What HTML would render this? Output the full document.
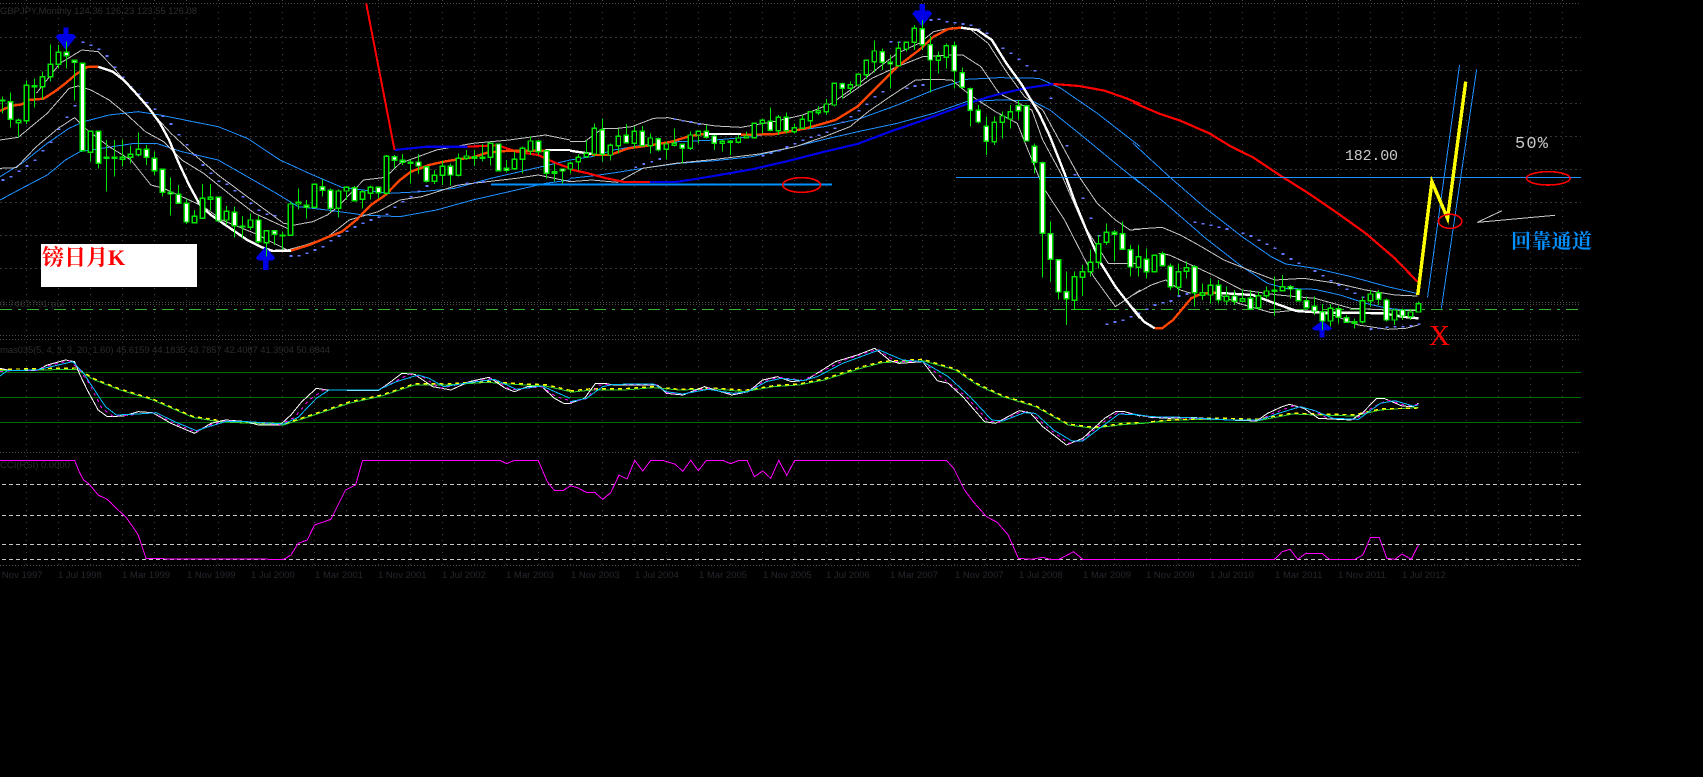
<!DOCTYPE html>
<html><head><meta charset="utf-8"><title>GBPJPY Monthly</title>
<style>
html,body{margin:0;padding:0;background:#000;width:1703px;height:777px;overflow:hidden}
svg{display:block;position:absolute;left:0;top:0}
path,ellipse{vector-effect:non-scaling-stroke;fill:none}
.lab{font-family:"Liberation Sans",sans-serif;font-size:9.5px;fill:#2c2c2c}
.d{font-family:"Liberation Sans",sans-serif;font-size:9.5px;fill:#26262e}
.w{stroke:#00e600;stroke-width:1}
.b{stroke-width:1.4}
.gy{stroke:#c4c4c4;stroke-width:1}
.bl{stroke:#1e90ff;stroke-width:1}
.dot{stroke:#6677ff;stroke-width:1.6;stroke-linecap:square}
.ma{stroke-width:2.4}
</style></head><body>
<svg width="1703" height="777" viewBox="0 0 1703 777" xmlns="http://www.w3.org/2000/svg" shape-rendering="crispEdges">
<rect width="1703" height="777" fill="#000"/>
<!-- grid -->
<path d="M26.5 0V565M58.5 0V565M90.5 0V565M122.5 0V565M154.5 0V565M186.5 0V565M218.5 0V565M250.5 0V565M282.5 0V565M314.5 0V565M346.5 0V565M378.5 0V565M410.5 0V565M442.5 0V565M474.5 0V565M506.5 0V565M538.5 0V565M570.5 0V565M602.5 0V565M634.5 0V565M666.5 0V565M698.5 0V565M730.5 0V565M762.5 0V565M794.5 0V565M826.5 0V565M858.5 0V565M890.5 0V565M922.5 0V565M954.5 0V565M986.5 0V565M1018.5 0V565M1050.5 0V565M1082.5 0V565M1114.5 0V565M1146.5 0V565M1178.5 0V565M1210.5 0V565M1242.5 0V565M1274.5 0V565M1306.5 0V565M1338.5 0V565M1370.5 0V565M1402.5 0V565M1434.5 0V565M1466.5 0V565M1498.5 0V565M1530.5 0V565M1562.5 0V565" stroke="#444" stroke-width="1" stroke-dasharray="1 5"/>
<path d="M0 37.5H1581M0 70.5H1581M0 103.5H1581M0 136.5H1581M0 169.5H1581M0 202.5H1581M0 235.5H1581M0 268.5H1581" stroke="#303838" stroke-width="1" stroke-dasharray="2 3"/>
<path d="M0 3.5H1581M0 302.5H1581M0 304.5H1581M0 335.5H1581M0 339.5H1581M0 452.5H1581M0 565.5H1581" stroke="#4c4c4c" stroke-width="1" stroke-dasharray="1 2"/>
<!-- fixed lines -->
<path d="M0 309.5H1581" stroke="#32b432" stroke-width="1" stroke-dasharray="12 6 3 6"/>
<path d="M0 372.5H1581M0 397.5H1581M0 422.5H1581" stroke="#006e00" stroke-width="1"/>
<path d="M2 484.5H1581M2 515.5H1581M2 544.5H1581M2 559.5H1581" stroke="#c8c8c8" stroke-width="1" stroke-dasharray="4 3"/>
<!-- labels -->
<text class="lab" x="0" y="14" textLength="197">GBPJPY,Monthly 124.36 126.23 123.55 126.08</text>
<text class="lab" x="0" y="307" textLength="64">0.7462701 pix</text>
<text class="lab" x="0" y="353" textLength="330">mas035(5, 4, 3, 3, 20, 1.60) 45.6159 44.1835 43.7857 42.4087 41.3904 50.6844</text>
<text class="lab" x="0" y="468" textLength="70">CCI(RSI) 0.0000</text>
<text class="d" x="-6" y="578">1 Nov 1997</text><text class="d" x="58" y="578">1 Jul 1998</text><text class="d" x="122" y="578">1 Mar 1999</text><text class="d" x="187" y="578">1 Nov 1999</text><text class="d" x="251" y="578">1 Jul 2000</text><text class="d" x="315" y="578">1 Mar 2001</text><text class="d" x="378" y="578">1 Nov 2001</text><text class="d" x="442" y="578">1 Jul 2002</text><text class="d" x="506" y="578">1 Mar 2003</text><text class="d" x="571" y="578">1 Nov 2003</text><text class="d" x="635" y="578">1 Jul 2004</text><text class="d" x="699" y="578">1 Mar 2005</text><text class="d" x="763" y="578">1 Nov 2005</text><text class="d" x="826" y="578">1 Jul 2006</text><text class="d" x="890" y="578">1 Mar 2007</text><text class="d" x="955" y="578">1 Nov 2007</text><text class="d" x="1019" y="578">1 Jul 2008</text><text class="d" x="1083" y="578">1 Mar 2009</text><text class="d" x="1146" y="578">1 Nov 2009</text><text class="d" x="1210" y="578">1 Jul 2010</text><text class="d" x="1275" y="578">1 Mar 2011</text><text class="d" x="1338" y="578">1 Nov 2011</text><text class="d" x="1402" y="578">1 Jul 2012</text>

<g>
<!-- CROP 1 -->
<g transform="translate(0 0) scale(.36364 .33333)">
<path class="bl" d="M0 600L60 565L130 525L180 480L220 455L280 445L370 430L430 430L500 455L600 480L680 530L760 580L820 620L900 630L1000 645L1100 650L1200 630L1300 600L1400 575L1500 550L1568 540"/>
<path class="bl" d="M0 530L60 490L130 430L190 385L230 365L300 345L380 335L440 345L530 365L600 380L680 415L770 480L850 520L940 562L1070 580L1160 575L1250 565L1350 535L1450 510L1568 480"/>
<path class="gy" d="M100 280L165 190L225 150L270 155L310 200L360 265L420 340L470 400L530 460L600 525L680 590L780 670L810 675L860 665L900 645L930 620L960 585L1000 540L1060 532L1100 490L1200 450L1300 430L1400 420L1500 405L1568 420"/>
<path class="gy" d="M0 420L50 412L130 340L190 265L215 258L250 270L300 300L350 345L400 395L450 425L500 480L560 520L640 590L700 640L800 690"/>
<path class="gy" d="M0 505L45 503L100 440L160 385L205 353L240 390L300 440L360 480L415 555L450 565L560 620L610 660L700 700L790 750L840 735L900 712L960 660L1040 635L1100 600L1160 590L1260 555L1340 545L1420 535L1480 525L1568 545"/>
<path class="dot" d="M7 540h3M29 530h3M51 514h3M73 498h3M95 481h3M117 452h3M139 427h3M161 388h3M183 352h3M205 317h3M227 127h3M249 136h3M271 148h3M293 168h3M315 202h3M337 232h3M359 260h3M381 283h3M403 308h3M425 328h3M447 349h3M469 372h3M491 404h3M513 434h3M535 465h3M557 495h3M579 520h3M601 544h3M623 553h3M645 572h3M667 590h3M689 610h3M711 631h3M733 643h3M755 647h3M799 768h3M821 767h3M843 760h3M865 750h3M887 740h3M909 722h3M931 708h3M953 694h3M975 681h3M997 670h3M1019 660h3M1041 652h3M1063 643h3M1085 622h3M1107 605h3M1129 590h3M1151 574h3M1173 558h3M1261 556h3M1283 550h3M1305 548h3M1327 546h3"/>
<path d="M1085 450L1175 440L1285 440" stroke="#0000e6" stroke-width="2.2"/>
<path d="M1285 440L1370 436L1420 455L1480 465L1500 475L1530 490L1568 505" stroke="#f00" stroke-width="2.2"/>
<path d="M1007 10L1085 450" stroke="#f00" stroke-width="2"/>
<path class="ma" stroke="#ff4500" d="M0 333L30 318L60 313L80 300L120 296L150 275L180 250L210 222L240 201L270 200"/>
<path class="ma" stroke="#fff" d="M270 200L310 215L340 240L370 275L410 325L440 370L465 420L490 485L520 555L550 615L580 645L620 675L680 720L720 742L750 753L800 752"/>
<path class="ma" stroke="#ff4500" d="M800 752L850 735L900 712L940 695L980 660L1020 615L1060 585L1100 540L1130 515L1180 495L1220 485L1260 478L1300 472L1340 458L1400 452L1500 452"/>
<path class="ma" stroke="#fff" d="M1500 450H1568"/>
<path d="M1350 553H1568" stroke="#0090ff" stroke-width="2"/>
<path style="fill:#0000e6" d="M174 82H189V102H201L209 110L181 150L153 110L161 102H174Z"/>
<path style="fill:#0000e6" d="M723 810H738V782H750L757 774L730 740L703 774L711 782H723Z"/>
<path class="w" d="M7 290V340M29 278V382M51 355V412M73 242V372M95 235V322M117 215V298M139 133V245M161 135V205M183 125V205M205 178V302M227 190V455M249 392V485M271 392V505M293 420V575M315 420V530M337 418V500M359 437V490M381 398V470M403 435V495M425 455V527M447 505V590M469 532V647M491 555V612M513 595V672M535 630V670M557 552V657M579 552V632M601 590V665M623 618V675M645 620V712M667 648V715M689 640V690M711 648V730M733 690V770M755 690V735M777 695V748M799 605V708M821 565V628M843 600V655M865 552V625M887 538V590M909 565V635M931 568V652M953 558V600M975 558V605M997 570V625M1019 557V598M1041 560V595M1063 465V583M1085 465V505M1107 462V495M1129 478V550M1151 462V522M1173 498V548M1195 510V552M1217 482V555M1239 490V557M1261 460V530M1283 450V480M1305 450V498M1327 432V485M1349 428V497M1371 430V515M1393 480V518M1415 455V510M1437 440V520M1459 410V465M1481 420V465M1503 450V535M1525 490V545M1547 505V550"/>
<path class="w b" style="fill:#000" d="M1 300H13V303H1ZM45 361H57V368H45ZM67 256H79V362H67ZM89 257H101V260H89ZM111 230H123V260H111ZM133 193H145V230H133ZM155 157H167V193H155ZM243 394H255V457H243ZM287 472H299V475H287ZM309 472H321V475H309ZM331 472H343V478H331ZM353 463H365V472H353ZM375 448H387V464H375ZM529 649H541V668H529ZM551 595H563V655H551ZM573 592H585V598H573ZM617 634H629V660H617ZM661 678H673V681H661ZM683 660H695V682H683ZM727 692H739V728H727ZM771 706H783V708H771ZM793 612H805V706H793ZM815 607H827V612H815ZM859 553H871V622H859ZM925 573H937V625H925ZM947 562H959V573H947ZM991 575H1003V598H991ZM1013 562H1025V580H1013ZM1057 469H1069V580H1057ZM1123 487H1135V490H1123ZM1189 526H1201V544H1189ZM1211 499H1223V526H1211ZM1255 475H1267V526H1255ZM1277 468H1289V475H1277ZM1321 472H1333V475H1321ZM1343 430H1355V472H1343ZM1409 478H1421V506H1409ZM1431 445H1443V478H1431ZM1453 423H1465V453H1453ZM1519 515H1531V520H1519Z"/>
<path class="w b" style="fill:#fff" d="M23 305H35V358H23ZM177 157H189V167H177ZM199 181H211V187H199ZM221 190H233V452H221ZM265 394H277V490H265ZM397 448H409V472H397ZM419 475H431V512H419ZM441 508H453V577H441ZM463 577H475V582H463ZM485 583H497V610H485ZM507 610H519V666H507ZM595 592H607V663H595ZM639 637H651V677H639ZM705 660H717V725H705ZM749 692H761V703H749ZM837 616H849V622H837ZM881 560H893V571H881ZM903 571H915V625H903ZM969 563H981V602H969ZM1035 562H1047V578H1035ZM1079 470H1091V481H1079ZM1101 481H1113V487H1101ZM1145 486H1157V498H1145ZM1167 500H1179V544H1167ZM1233 499H1245V525H1233ZM1299 470H1311V475H1299ZM1365 432H1377V512H1365ZM1387 505H1399V511H1387ZM1475 424H1487V455H1475ZM1497 452H1509V520H1497ZM1541 507H1553V513H1541Z"/>
</g>
<!-- CROP 2 -->
<g transform="translate(570 0) scale(.36364 .33333)">
<path class="bl" d="M0 535L60 528L130 517L200 505L300 490L400 482L500 470L600 445L700 418L800 393L900 370L1000 340L1090 305L1180 300L1270 302L1320 330L1400 400L1500 490L1568 550"/>
<path class="bl" d="M0 480L60 470L120 450L200 435L300 425L400 420L500 410L600 395L700 380L800 355L900 315L1000 270L1090 238L1180 233L1290 235L1350 265L1450 340L1568 440"/>
<path class="gy" d="M0 425L40 425L90 385L130 385L170 380L230 355L270 353L340 368L400 378L470 382L560 365L640 345L720 310L790 255L840 210L900 160L960 130L1000 95L1050 83L1100 87L1150 130L1200 215L1250 290L1300 330L1350 430L1400 530L1450 610L1500 660L1540 690L1568 688"/>
<path class="gy" d="M0 545L60 540L130 547L200 505L290 490L400 478L520 462L620 440L700 410L770 380L820 335L880 290L950 240L1000 238L1050 240L1100 285L1170 335L1230 370L1300 560L1360 660L1440 830L1500 920L1568 870"/>
<path class="gy" d="M750 295L830 235L900 200L970 170L1040 165L1080 165L1130 200L1180 280L1270 330L1300 420L1350 520L1410 670L1480 790L1568 790"/>
<path class="dot" d="M179 502h3M201 492h3M223 485h3M245 477h3M287 358h3M309 362h3M331 366h3M353 372h3M529 467h3M551 460h3M573 452h3M595 441h3M617 431h3M639 421h3M661 412h3M683 406h3M705 397h3M727 385h3M749 367h3M771 350h3M793 332h3M815 313h3M837 290h3M859 275h3M881 125h3M903 127h3M925 265h3M947 258h3M969 255h3M991 60h3M1013 58h3M1035 65h3M1057 68h3M1079 72h3M1101 76h3M1123 88h3M1145 100h3M1167 135h3M1189 145h3M1211 160h3M1233 178h3M1255 197h3M1277 212h3M1321 295h3M1365 437h3M1387 524h3M1409 595h3M1431 655h3M1453 707h3M1475 973h3M1497 966h3M1519 961h3M1541 950h3M1563 940h3"/>
<path d="M0 508L50 520L100 535L150 546L220 546" stroke="#f00" stroke-width="2.2"/>
<path d="M220 546L290 546L340 538L400 527L500 508L600 483L700 455L790 432L880 395L960 365L1060 325L1100 308L1170 285L1250 265L1330 252" stroke="#0000e6" stroke-width="2.2"/>
<path d="M1330 252L1400 258L1470 272L1530 295L1568 312" stroke="#f00" stroke-width="2.2"/>
<path class="ma" stroke="#fff" d="M0 452L60 462"/>
<path class="ma" stroke="#ff4500" d="M60 465L110 465L160 445L220 436L280 425L330 408L370 402"/>
<path class="ma" stroke="#fff" d="M370 402H470"/>
<path class="ma" stroke="#ff4500" d="M470 404L560 403L650 385L730 360L790 320L850 255L900 200L960 150L1000 110L1040 87L1075 83"/>
<path class="ma" stroke="#fff" d="M1075 83L1120 90L1160 120L1200 190L1240 250L1290 340L1320 410L1360 520L1390 610L1420 690L1460 790L1500 860L1568 955"/>
<path d="M0 553H720" stroke="#0090ff" stroke-width="2"/>
<path d="M1062 532H1568" stroke="#1e90ff" stroke-width="1"/>
<ellipse cx="637" cy="555" rx="52" ry="22" stroke="#f00" stroke-width="1.6"/>
<path style="fill:#0000e6" d="M961 12H976V32H988L996 40L968 80L941 40L949 32H961Z"/>
<path class="w" d="M1 485V520M23 462V512M45 420V472M67 370V470M89 355V485M111 430V482M133 385V460M155 372V430M177 380V445M199 378V440M221 400V460M243 412V455M265 425V478M287 385V440M309 432V490M331 395V450M353 395V430M375 375V415M397 405V450M419 420V455M441 420V465M463 405V430M485 395V415M507 368V415M529 355V400M551 322V395M573 345V405M595 338V400M617 370V400M639 345V385M661 335V385M683 318V345M705 297V345M727 248V320M749 248V295M771 245V280M793 220V260M815 178V237M837 122V217M859 145V210M881 165V265M903 125V200M925 125V155M947 75V150M969 60V150M991 108V278M1013 155V220M1035 130V205M1057 125V265M1079 203V265M1101 262V380M1123 315V370M1145 350V465M1167 350V435M1189 335V415M1211 315V385M1233 300V358M1255 315V425M1277 430V520M1299 485V832M1321 665V845M1343 778V898M1365 815V975M1387 815V928H1420M1409 795V888M1431 748V830M1453 705V805M1475 670V735M1497 690V785M1519 665V750M1541 735V830"/>
<path class="w b" style="fill:#000" d="M-5 490H7V507H-5ZM17 472H29V485H17ZM39 460H51V470H39ZM61 385H73V462H61ZM105 436H117V465H105ZM127 409H139V437H127ZM171 394H183V430H171ZM215 414H227V437H215ZM259 432H271V448H259ZM281 430H293V436H281ZM325 405H337V445H325ZM347 394H359V405H347ZM413 424H425V430H413ZM435 423H447V427H435ZM457 414H469V427H457ZM479 408H491V413H479ZM501 370H513V413H501ZM523 361H535V370H523ZM567 352H579V392H567ZM611 383H623V395H611ZM633 358H645V385H633ZM655 335H667V362H655ZM677 332H689V338H677ZM699 312H711V335H699ZM721 250H733V315H721ZM765 254H777V265H765ZM787 223H799V255H787ZM809 181H821V224H809ZM831 153H843V185H831ZM897 145H909V197H897ZM919 127H931V147H919ZM941 85H953V127H941ZM1007 169H1019V181H1007ZM1029 137H1041V172H1029ZM1161 367H1173V425H1161ZM1183 348H1195V367H1183ZM1205 335H1217V357H1205ZM1381 830H1393V901H1381ZM1403 815H1415V832H1403ZM1425 787H1437V815H1425ZM1447 731H1459V787H1447ZM1469 697H1481V727H1469Z"/>
<path class="w b" style="fill:#fff" d="M83 389H95V463H83ZM149 406H161V428H149ZM193 394H205V437H193ZM237 416H249V450H237ZM303 433H315V445H303ZM369 394H381V412H369ZM391 408H403V430H391ZM545 364H557V391H545ZM589 352H601V392H589ZM743 251H755V265H743ZM853 155H865V187H853ZM875 187H887V192H875ZM963 86H975V134H963ZM985 134H997V180H985ZM1051 137H1063V213H1051ZM1073 218H1085V262H1073ZM1095 266H1107V331H1095ZM1117 331H1129V366H1117ZM1139 379H1151V424H1139ZM1227 317H1239V332H1227ZM1249 317H1261V423H1249ZM1271 439H1283V487H1271ZM1293 488H1305V700H1293ZM1315 701H1327V778H1315ZM1337 779H1349V876H1337ZM1359 875H1371V896H1359ZM1491 697H1503V703H1491ZM1513 701H1525V748H1513ZM1535 749H1547V801H1535Z"/>
</g>
<!-- CROP 3 -->
<g transform="translate(1133 0) scale(.36364 .33333)">
<path class="bl" d="M0 430L100 530L200 625L300 710L380 770L420 792L500 805L600 830L700 860L780 880"/>
<path class="bl" d="M0 530L100 620L200 715L300 800L370 850L420 865L500 868L570 885L640 910L700 925L770 932"/>
<path class="gy" d="M0 688L80 682L130 705L180 735L250 780L330 815L390 840L470 835L560 850L640 870L720 885L782 888"/>
<path class="gy" d="M0 885L50 855L90 840L130 870L160 880M70 760L100 765L150 790L220 825L300 870L400 885L500 895L600 925L700 930L780 932"/>
<path class="gy" d="M170 885L230 880L290 910L380 938L450 930L550 945L620 975L700 988L750 985L785 975"/>
<path class="dot" d="M37 928h3M59 915h3M81 908h3M103 903h3M125 888h3M147 882h3M169 667h3M191 671h3M213 676h3M235 682h3M257 687h3M301 700h3M323 708h3M345 721h3M367 733h3M389 745h3M411 762h3M433 777h3M455 790h3M499 813h3M521 827h3M543 842h3M565 855h3M587 868h3M609 880h3M631 892h3M653 987h3M675 985h3M697 982h3M719 980h3M741 980h3M763 977h3M785 973h3"/>
<path stroke="#f00" stroke-width="2.2" d="M0 307L70 340L130 362L210 400L270 440L330 472L410 530L480 578L550 630L640 700L720 775L782 845"/>
<path class="ma" stroke="#fff" d="M0 925L30 965L60 985"/>
<path class="ma" stroke="#ff4500" d="M60 985L80 985L110 960L160 895L190 880L225 878"/>
<path class="ma" stroke="#fff" d="M225 878L330 885L390 910L450 933L520 938L600 938L690 940L740 950L785 955"/>
<path style="fill:#0000e6" d="M513 1012V992H500L492 985L520 962L548 985L540 992H527V1012Z"/>
<path class="w" d="M37 745V835M59 765V815M81 755V800M103 790V870M125 790V885M147 785V835M169 795V920M191 850V900M213 835V910M235 840V910M257 860V915M279 870V915M301 868V905M323 870V930M345 875V930M367 860V895M389 830V948M411 825V875M433 855V895M455 865V905M477 890V925M499 890V945M521 912V990M543 912V980M565 918V970M587 945V968M609 955V985M631 890V970M653 870V920M675 870V915M697 895V965M719 925V975M741 925V960M763 930V960M785 905V938M15 735V830"/>
<path class="w b" style="fill:#000" d="M9 770H21V802H9ZM53 766H65V815H53ZM119 815H131V862H119ZM141 803H153V814H141ZM185 878H197V886H185ZM207 856H219V885H207ZM251 889H263V903H251ZM295 896H307V904H295ZM339 887H351V923H339ZM361 873H373V887H361ZM383 871H395V874H383ZM405 860H417V872H405ZM537 925H549V963H537ZM603 965H615V970H603ZM625 902H637V965H625ZM647 882H659V902H647ZM713 930H725V960H713ZM757 936H769V950H757ZM779 911H791V936H779Z"/>
<path class="w b" style="fill:#fff" d="M31 778H43V815H31ZM75 761H87V797H75ZM97 799H109V860H97ZM163 800H175V878H163ZM229 856H241V900H229ZM273 888H285V904H273ZM317 895H329V927H317ZM427 860H439V867H427ZM449 869H461V902H449ZM471 902H483V923H471ZM493 919H505V933H493ZM515 935H527V963H515ZM559 926H571V952H559ZM581 953H593V967H581ZM669 878H681V898H669ZM691 900H703V960H691ZM735 930H747V948H735Z"/>
<path d="M810 892L898 195M848 925L945 208" stroke="#1e90ff" stroke-width="1"/>
<path d="M0 532H1232" stroke="#1e90ff" stroke-width="1"/>
<path d="M783 885L822 545L865 655L915 245" stroke="#ff0" stroke-width="3.4"/>
<ellipse cx="1142" cy="535" rx="60" ry="20" stroke="#f00" stroke-width="1.6"/>
<ellipse cx="872" cy="664" rx="32" ry="21" stroke="#f00" stroke-width="1.6"/>
<path d="M1015 632L947 667L1160 646" stroke="#c8c8c8" stroke-width="1"/>
</g>
<!-- LOWER 1 -->
<g transform="translate(0 340) scale(.36364 .33333)">
<path stroke="#32cd32" stroke-width="1" d="M0 92L210 88L260 120L330 150L420 180L530 232L600 245L780 255L850 230L960 190L1050 168L1140 135L1230 135L1340 127L1440 135L1500 138L1568 155"/>
<path stroke="#ff0" stroke-width="1.4" stroke-dasharray="4 4" d="M0 88L210 84L260 117L330 147L420 177L530 229L600 241L780 252L850 227L960 186L1050 165L1140 131L1230 132L1340 124L1440 132L1500 134L1568 151"/>
<path stroke="#fff" stroke-width="1" d="M0 85L30 92L100 92L130 75L180 60L205 65L220 105L240 150L270 210L295 230L340 228L380 215L420 218L470 250L535 280L580 250L620 240L680 245L710 255L770 255L800 225L830 185L870 145L900 150L1040 152L1075 125L1105 100L1140 103L1190 140L1240 150L1290 125L1345 112L1390 145L1415 155L1450 140L1490 140L1525 175L1550 190L1568 190"/>
<path stroke="#f0f" stroke-width="1" stroke-dasharray="3 4" d="M0 95L30 92L100 92L130 78L190 62L215 85L245 130L280 205L310 228L360 225L420 218L475 248L538 276L580 254L620 243L680 245L770 254L810 232L850 180L890 150L1040 150L1085 125L1125 103L1165 112L1210 145L1290 127L1355 115L1405 150L1490 140L1530 170L1568 182"/>
<path stroke="#00bfff" stroke-width="1" d="M0 108L20 92L100 90L140 80L200 65L230 100L260 150L290 200L320 225L380 222L430 218L480 245L540 272L580 258L620 245L680 245L780 252L820 232L870 175L905 150L1040 150L1090 125L1150 105L1180 115L1220 140L1290 128L1360 118L1420 148L1490 138L1568 175"/>
<path stroke="#f0f" stroke-width="1" d="M0 361H205L220 400L230 420L245 432L270 465L295 478L320 505L345 530L365 560L380 585L402 656L780 658L800 645L820 610L845 600L865 555L910 538L950 450L978 435L997 361H1375L1393 371L1415 361H1480L1505 425L1525 452H1548L1568 438"/>
</g>
<!-- LOWER 2 -->
<g transform="translate(570 340) scale(.36364 .33333)">
<path stroke="#32cd32" stroke-width="1" d="M0 157L60 150L150 150L230 143L300 150L400 147L480 155L560 140L630 135L700 120L800 85L860 68L970 62L1060 90L1120 135L1190 170L1280 200L1370 255L1440 265L1510 255L1568 250"/>
<path stroke="#ff0" stroke-width="1.4" stroke-dasharray="4 4" d="M0 153L60 146L150 146L230 140L300 148L400 144L480 151L560 137L630 132L700 116L800 81L860 64L970 58L1060 87L1120 131L1190 167L1280 197L1370 252L1440 262L1510 252L1568 247"/>
<path stroke="#fff" stroke-width="1" d="M0 190L40 175L70 130L95 130L120 135L240 135L265 160L310 165L370 140L445 165L490 155L530 120L570 110L610 125L650 120L730 65L790 45L838 25L880 62L905 70L970 65L1010 122L1040 130L1080 170L1140 245L1170 250L1235 212L1265 218L1300 260L1365 315L1410 295L1470 235L1500 215L1525 215L1568 228"/>
<path stroke="#f0f" stroke-width="1" stroke-dasharray="3 4" d="M0 187L45 176L80 135L120 133L235 133L265 158L310 163L375 144L448 162L490 155L535 122L575 112L640 121L700 90L760 58L845 28L895 65L970 65L1025 115L1090 170L1150 243L1180 247L1240 215L1270 219L1315 265L1372 310L1410 300L1465 248L1505 218L1568 226"/>
<path stroke="#00bfff" stroke-width="1" d="M0 185L45 175L90 140L120 133L230 132L265 155L310 162L380 148L450 160L490 155L540 125L580 115L640 122L680 110L750 70L850 30L915 60L970 65L1040 110L1100 170L1160 240L1190 243L1250 218L1280 220L1330 270L1380 303L1410 303L1460 262L1510 222L1568 225"/>
<path stroke="#f0f" stroke-width="1" d="M0 437L20 443L45 457H68L90 478L112 458L135 405L157 417L178 361L200 393L222 361H255L290 373L310 394L332 361L353 392L375 361H420L442 371L465 361H487L507 410L530 393L552 415L574 361L596 406L618 361H1035L1055 385L1085 450L1105 480L1145 530L1175 547L1205 585L1233 655L1270 658L1300 652L1320 658H1345L1385 635L1410 658H1568"/>
</g>
<!-- LOWER 3 -->
<g transform="translate(1133 340) scale(.36364 .33333)">
<path stroke="#32cd32" stroke-width="1" d="M0 252L30 250L110 240L230 238L340 243L440 222L500 225L610 228L680 210L785 202"/>
<path stroke="#ff0" stroke-width="1.4" stroke-dasharray="4 4" d="M50 245L110 240L230 234L340 238L440 219L500 222L610 224L680 207L785 204"/>
<path stroke="#fff" stroke-width="1" d="M0 222L50 232L100 235L160 232L260 240L340 243L370 220L410 200L430 193L470 205L510 235L600 240L630 220L670 175L690 175L740 198L770 200L785 190"/>
<path stroke="#f0f" stroke-width="1" stroke-dasharray="3 4" d="M0 222L50 231L120 233L260 240L345 241L385 220L440 198L490 208L530 232L610 239L655 205L700 180L755 198L785 193"/>
<path stroke="#00bfff" stroke-width="1" d="M0 222L50 230L140 232L260 240L350 240L400 220L460 200L500 212L550 235L620 238L680 190L720 182L770 198L785 195"/>
<path stroke="#f0f" stroke-width="1" d="M0 658H390L410 635L432 628L453 658L475 640H520L540 658H610L632 645L653 592H677L698 655L720 658L740 642L765 658L785 615"/>
</g>
</g>
<!-- annotations -->
<rect x="41" y="244" width="156" height="43" fill="#fff"/>
<text x="42" y="265" style="font-family:'Liberation Serif','Noto Serif CJK SC',serif;font-size:22px;font-weight:700" fill="#f00">镑日月K</text>
<text x="1345" y="160" style="font-family:'Liberation Mono',monospace;font-size:15px" fill="#c8c8c8" textLength="53">182.00</text>
<text x="1515" y="148" style="font-family:'Liberation Mono',monospace;font-size:17px" fill="#c8c8c8" textLength="33">50%</text>
<text x="1511" y="248" style="font-family:'Liberation Serif','Noto Serif CJK SC',serif;font-size:20px;font-weight:700" fill="#0090ff" textLength="81">回靠通道</text>
<text x="1429" y="345" style="font-family:'Liberation Serif',serif;font-size:29px" fill="#f00">X</text>
</svg>
</body></html>
